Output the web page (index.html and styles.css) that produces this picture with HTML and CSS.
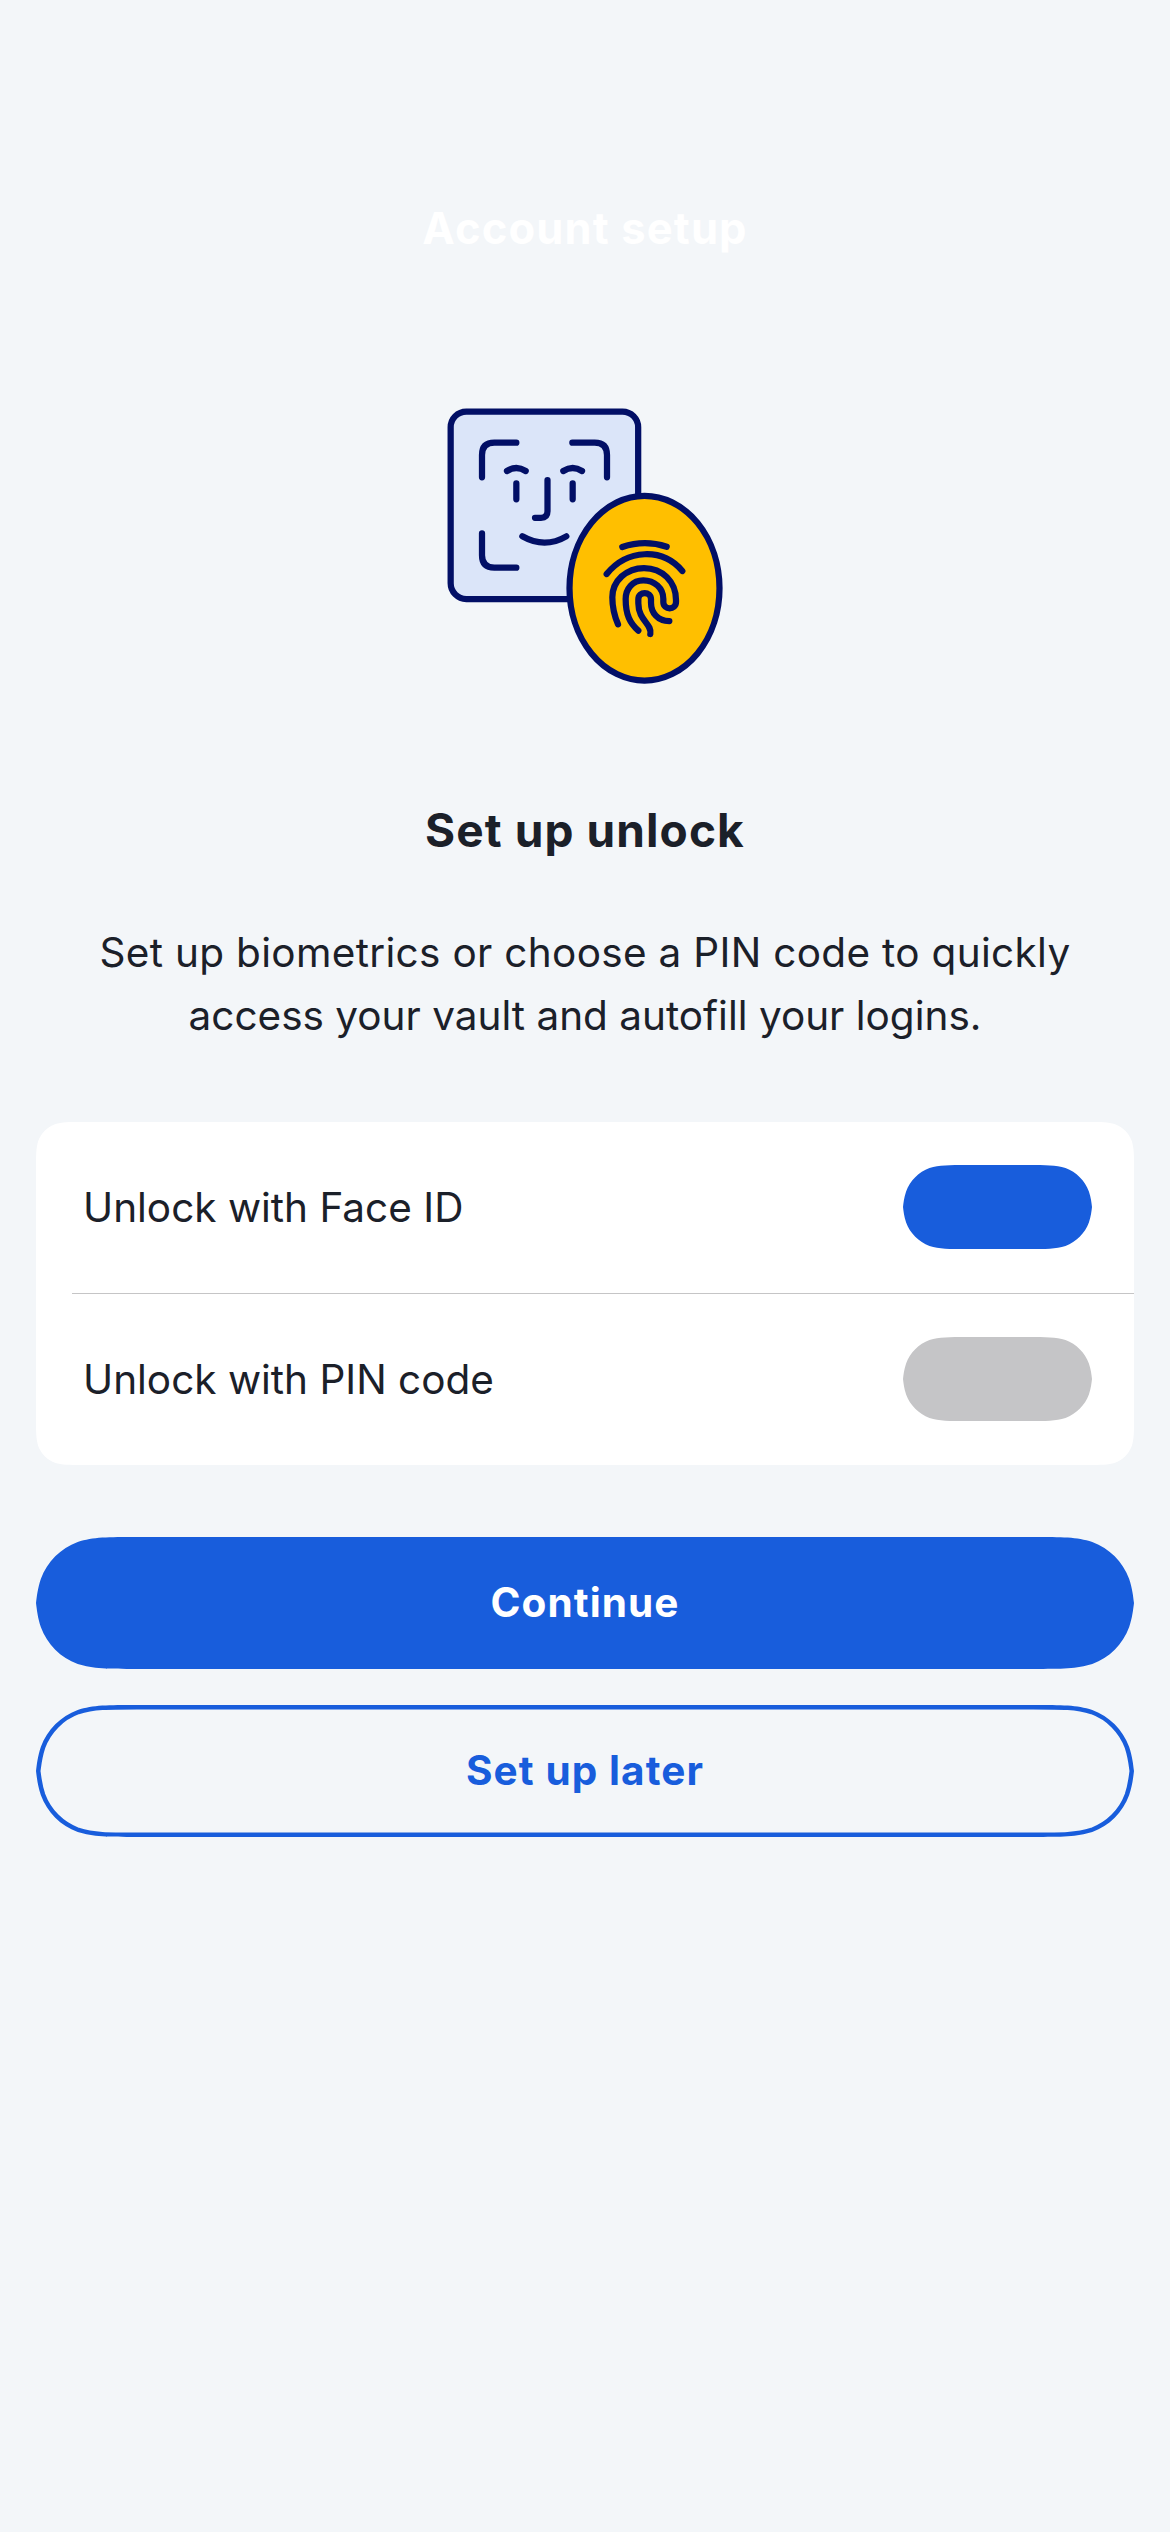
FILE: index.html
```html
<!DOCTYPE html>
<html lang="en">
<head>
<meta charset="utf-8">
<title>Account setup</title>
<link rel="stylesheet" href="styles.css">
</head>
<body>
<header class="nav"><span class="nav-title">Account setup</span></header>
<main class="content">
  <svg class="illustration" viewBox="0 0 930 930" aria-hidden="true">
    <g fill="none" stroke="#020f66" stroke-width="18.75" stroke-linecap="round" stroke-linejoin="round">
      <rect x="62" y="64.5" width="562.5" height="562.5" rx="47" fill="#dbe5f9"/>
      <path d="M156 262V195Q156 158 193 158H259M427 158H494Q531 158 531 195V262M156 430V496Q156 533 193 533H259"/>
      <path d="M231 243Q259 225 287 243M400 243Q428 225 456 243M259 280V328M428 280V328"/>
      <path d="M352.500 270V364Q352.500 383.500 333 383.500H315M277 439Q344 477 409 439"/>
      <ellipse cx="643.5" cy="594.5" rx="225" ry="277" fill="#ffbf00"/>
      <path d="M577 471Q643 448 710 470M530 552C591 477 697 472 757 543"/>
      <path d="M564 703C552 675 547 655 547 622C547 572 590 534 642 534C697 534 738 575 738 630V636C738 661 700 661 700 636V627C700 594 673 571 640 571C608 571 587 596 587 627C587 675 600 700 625 722"/>
      <path d="M661 732C667 702 625 692 625 640V628C625 603 663 603 663 628V638C663 668 683 693 718 693"/>
    </g>
  </svg>
  <h1 class="heading">Set up unlock</h1>
  <p class="description"><span class="line-one">Set up biometrics or choose a PIN code to quickly</span><br>access your vault and autofill your logins.</p>
  <section class="card">
    <div class="row"><span>Unlock with Face ID</span><span class="toggle toggle-on"></span></div>
    <div class="divider"></div>
    <div class="row"><span>Unlock with PIN code</span><span class="toggle"></span></div>
  </section>
  <div class="actions">
    <button class="button primary">Continue</button>
    <button class="button secondary">
      <svg class="outline" viewBox="0 0 1098 132" aria-hidden="true"><path d="M100.900 0C71.800 0 57.300 0 41.700 4.900C24.600 11.200 11.200 24.600 4.900 41.700C1.600 51.500 .9 59 0 66C.9 73 1.600 80.500 4.900 90.300C11.200 107.400 24.600 120.800 41.700 127.100C57.300 132 71.800 132 100.900 132H997.100C1026.200 132 1040.700 132 1056.300 127.100C1073.400 120.800 1086.800 107.400 1093.100 90.300C1096.400 80.500 1097.100 73 1098 66C1097.100 59 1096.400 51.500 1093.100 41.700C1086.800 24.600 1073.400 11.200 1056.300 4.900C1040.700 0 1026.200 0 997.100 0Z"/></svg>
      Set up later
    </button>
  </div>
</main>
</body>
</html>
```
FILE: styles.css
```css
* { box-sizing: border-box; }
body {
  margin: 0;
  min-height: 2532px;
  background: #f3f6f9;
  color: #1b2029;
  font-family: Inter, sans-serif;
  font-size: 40.5px;
}
.nav { height: 390px; padding-top: 198px; text-align: center; color: #fff; }
.nav-title { font-size: 43.5px; line-height: 60px; font-weight: 700; letter-spacing: 1.15px; }
.content { padding: 0 36px; display: flex; flex-direction: column; }
.illustration { width: 310px; height: 310px; margin-left: 394px; }
.heading { margin: 100px 0 0; text-align: center; font-size: 46px; line-height: 60px; font-weight: 700; letter-spacing: 1.1px; }
.description { margin: 61px 0 0; text-align: center; line-height: 63px; white-space: nowrap; }
.line-one { letter-spacing: .32px; }
.card {
  margin-top: 75px;
  height: 343px;
  background: #fff;
  clip-path: path("M45.9 0C32.7 0 26.1 0 18.9 2.2C11.2 5.1 5.1 11.2 2.2 18.9C0 26.1 0 32.7 0 45.9V297.1C0 310.3 0 316.9 2.2 324.1C5.1 331.8 11.2 337.9 18.9 340.8C26.1 343 32.7 343 45.9 343H1052.1C1065.3 343 1071.9 343 1079.1 340.8C1086.8 337.9 1092.9 331.8 1095.8 324.1C1098 316.9 1098 310.3 1098 297.1V45.9C1098 32.7 1098 26.1 1095.8 18.9C1092.9 11.2 1086.8 5.1 1079.1 2.2C1071.9 0 1065.3 0 1052.1 0Z");
}
.row { height: 171px; padding: 43px 42px 44px 47px; display: flex; justify-content: space-between; align-items: center; }
.divider { height: 1px; margin-left: 36px; background: #c5c5c6; }
.toggle {
  width: 189px;
  height: 84px;
  background: #c5c5c7;
  clip-path: path("M64.2 0C45.7 0 36.5 0 26.5 3.1C15.7 7.1 7.1 15.7 3.1 26.5C1 32.8 .5 37.8 0 42C.5 46.2 1 51.2 3.1 57.5C7.1 68.3 15.7 76.9 26.5 80.9C36.5 84 45.7 84 64.2 84H124.8C143.3 84 152.5 84 162.5 80.9C173.3 76.9 181.9 68.3 185.9 57.5C188 51.2 188.5 46.2 189 42C188.5 37.8 188 32.8 185.9 26.5C181.9 15.7 173.3 7.1 162.5 3.1C152.5 0 143.3 0 124.8 0Z");
}
.toggle-on { background: #185ddc; }
.actions { margin-top: 72px; display: flex; flex-direction: column; gap: 36px; }
.button {
  position: relative;
  height: 132px;
  padding: 0;
  border: 0;
  background: none;
  font: 700 40.5px/60px Inter, sans-serif;
  letter-spacing: 1.1px;
  clip-path: path("M100.9 0C71.8 0 57.3 0 41.7 4.9C24.6 11.2 11.2 24.6 4.9 41.7C1.6 51.5 .9 59 0 66C.9 73 1.6 80.5 4.9 90.3C11.2 107.4 24.6 120.8 41.7 127.1C57.3 132 71.8 132 100.9 132H997.1C1026.2 132 1040.7 132 1056.3 127.1C1073.4 120.8 1086.8 107.4 1093.1 90.3C1096.4 80.5 1097.1 73 1098 66C1097.1 59 1096.4 51.5 1093.1 41.7C1086.8 24.6 1073.4 11.2 1056.3 4.9C1040.7 0 1026.2 0 997.1 0Z");
}
.primary { background: #185ddc; color: #fff; }
.secondary { color: #185ddc; }
.outline { position: absolute; inset: 0; width: 1098px; height: 132px; fill: none; stroke: #185ddc; stroke-width: 9px; }
```
